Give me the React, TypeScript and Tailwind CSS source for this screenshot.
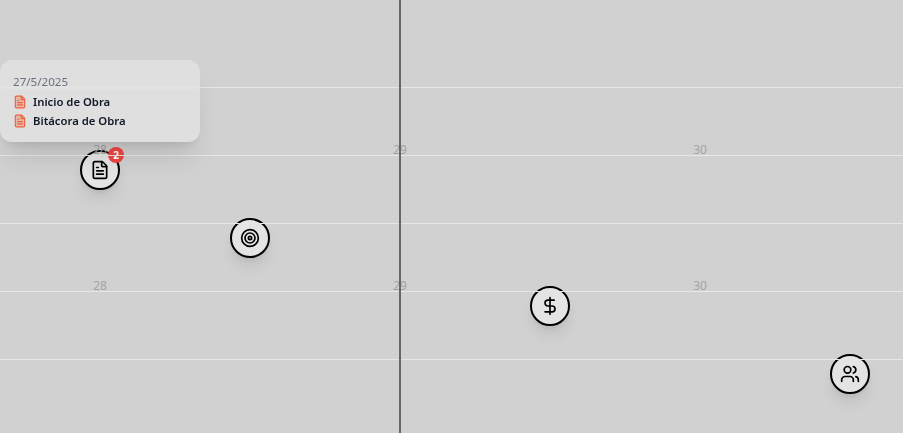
import type { ReactNode } from "react";
import { DollarSign, FileText, Target, Users } from "lucide-react";

const rowLabels = [false, true, false, true, false];

// days repeat every 300px, the first one is cut off by the left edge
function GridRow({ showDays }: { showDays: boolean }) {
  return (
    <div className="-ml-[50px] grid h-[68px] grid-cols-[repeat(3,300px)] items-end border-b border-[#e6e6e6]">
      {showDays &&
        ["28", "29", "30"].map((d) => (
          <span key={d} className="-mb-px text-center text-xs leading-3 text-[#a3a3a3]">
            {d}
          </span>
        ))}
    </div>
  );
}

function Marker({ left, top, children, badge }: { left: number; top: number; children: ReactNode; badge?: number }) {
  return (
    <div
      className="absolute flex size-10 items-center justify-center rounded-full border-2 border-black bg-[#e4e4e4] text-black shadow-lg"
      style={{ left, top }}
    >
      {children}
      {badge && (
        <span className="absolute -right-[6px] -top-[5px] flex size-4 items-center justify-center rounded-full bg-[#ef4444] text-[10px] font-bold text-white">
          {badge}
        </span>
      )}
    </div>
  );
}

function DocItem({ label }: { label: string }) {
  return (
    <li className="flex items-center gap-[6px]">
      <FileText size={14} className="fill-[#f0603c]/30 text-[#f0603c]" />
      {label}
    </li>
  );
}

export default function App() {
  return (
    <div className="relative h-[433px] w-[903px] overflow-hidden bg-[#d1d1d1] font-['Noto_Sans','Open_Sans',sans-serif]">
      <Marker left={80} top={150} badge={2}>
        <FileText size={20} />
      </Marker>
      <Marker left={230} top={218}>
        <Target size={20} />
      </Marker>
      <Marker left={530} top={286}>
        <DollarSign size={20} />
      </Marker>
      <Marker left={830} top={354}>
        <Users size={20} />
      </Marker>

      {/* grid paints over the markers, same as the real chart */}
      <div className="relative pt-[20px]">
        {rowLabels.map((show, i) => (
          <GridRow key={i} showDays={show} />
        ))}
      </div>

      {/* today line */}
      <div className="absolute bottom-0 left-[399px] top-0 w-[2px] bg-[#666666]" />

      <div className="absolute left-0 top-[60px] flex h-[82px] w-[200px] flex-col gap-[4px] rounded-xl bg-white/30 px-[13px] pt-[14px] shadow-xl backdrop-blur-[1px]">
        <p className="text-[11.6px] leading-4 text-[#6b7280]">27/5/2025</p>
        <ul className="flex flex-col gap-[3px] text-[11.3px] font-semibold leading-4 text-[#111827]">
          <DocItem label="Inicio de Obra" />
          <DocItem label="Bitácora de Obra" />
        </ul>
      </div>
    </div>
  );
}
